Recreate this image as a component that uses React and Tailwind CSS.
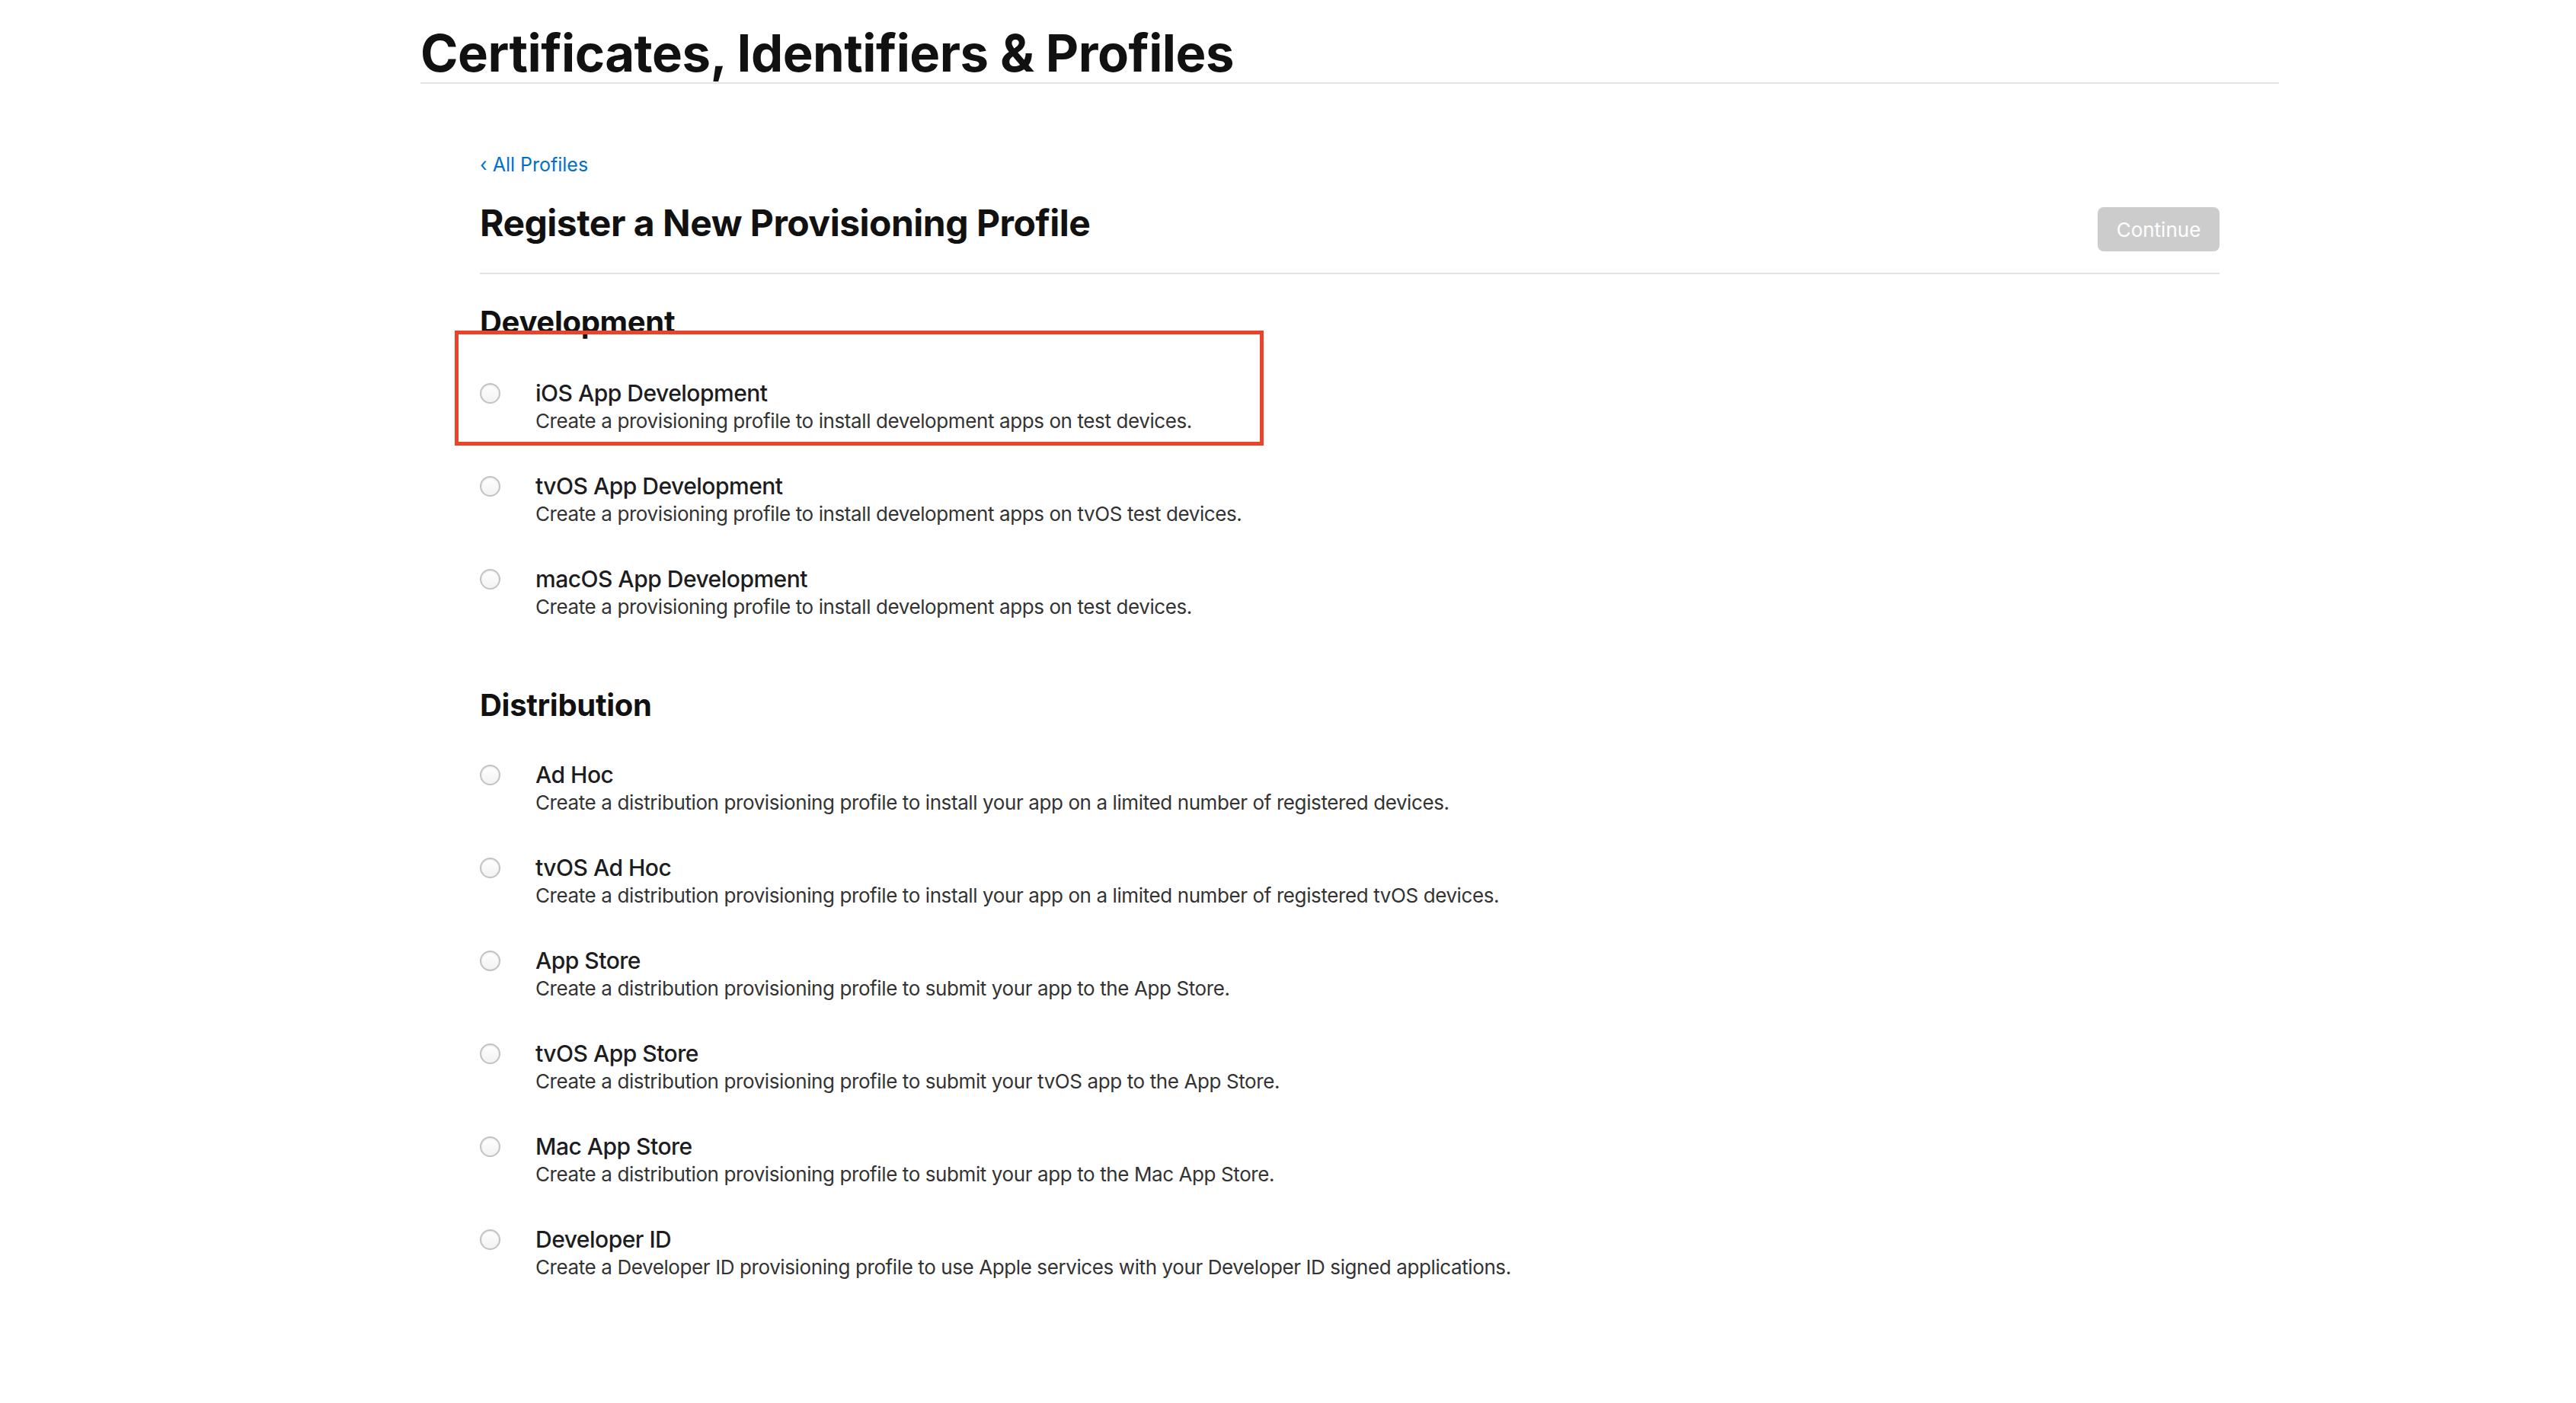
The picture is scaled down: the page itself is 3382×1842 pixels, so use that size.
import React from 'react'

const development = [
  { title: 'iOS App Development', desc: 'Create a provisioning profile to install development apps on test devices.', marked: true },
  { title: 'tvOS App Development', desc: 'Create a provisioning profile to install development apps on tvOS test devices.' },
  { title: 'macOS App Development', desc: 'Create a provisioning profile to install development apps on test devices.' },
]

const distribution = [
  { title: 'Ad Hoc', desc: 'Create a distribution provisioning profile to install your app on a limited number of registered devices.' },
  { title: 'tvOS Ad Hoc', desc: 'Create a distribution provisioning profile to install your app on a limited number of registered tvOS devices.' },
  { title: 'App Store', desc: 'Create a distribution provisioning profile to submit your app to the App Store.' },
  { title: 'tvOS App Store', desc: 'Create a distribution provisioning profile to submit your tvOS app to the App Store.' },
  { title: 'Mac App Store', desc: 'Create a distribution provisioning profile to submit your app to the Mac App Store.' },
  { title: 'Developer ID', desc: 'Create a Developer ID provisioning profile to use Apple services with your Developer ID signed applications.' },
]

function Option({ title, desc, marked }) {
  return (
    <label className="relative flex items-start cursor-pointer">
      {marked && (
        <div className="absolute -left-[33px] -top-[64px] w-[1062px] h-[151px] border-[5px] border-[#e8432b] pointer-events-none" />
      )}
      <span className="mt-[5px] w-[27px] h-[27px] shrink-0 rounded-full border-2 border-[#c2c2c2] bg-gradient-to-b from-white to-[#f2f2f2] shadow-[inset_0_1px_2px_rgba(0,0,0,0.1)]" />
      <div className="ml-[46px]">
        <div className="text-[30px] leading-[36px] font-medium text-[#1d1d1f] tracking-[-0.5px]">{title}</div>
        <div className="mt-[3px] text-[26px] leading-[32px] text-[#333] tracking-[-0.4px]">{desc}</div>
      </div>
    </label>
  )
}

export default function App() {
  return (
    <div className="min-h-screen bg-white" style={{ fontFamily: 'Inter, "Noto Sans", "Liberation Sans", sans-serif' }}>
      <div className="ml-[552px] w-[2440px] pt-[31px] pb-[80px]">
        <h1 className="text-[67px] leading-[77px] font-bold text-[#111] tracking-[-0.5px]">Certificates, Identifiers &amp; Profiles</h1>
        <div className="h-[2px] bg-[#e3e3e3]" />

        <div className="px-[78px]">
          <a href="#" className="block mt-[90px] text-[25px] leading-[32px] text-[#0070c9]">‹ All Profiles</a>

          <div className="mt-[33px] flex items-start justify-between">
            <h2 className="text-[48px] leading-[56px] font-bold text-[#111] tracking-[-0.5px]">Register a New Provisioning Profile</h2>
            <button className="mt-[7px] w-[160px] h-[58px] rounded-[8px] bg-[#cccccc] text-white text-[26px]">Continue</button>
          </div>
          <div className="mt-[28px] h-[2px] bg-[#e3e3e3]" />

          <h3 className="mt-[41px] text-[40px] leading-[44px] font-bold text-[#111] tracking-[-0.3px]">Development</h3>
          <div className="mt-[53px] flex flex-col gap-[51px]">
            {development.map(o => <Option key={o.title} {...o} />)}
          </div>

          <h3 className="mt-[91px] text-[40px] leading-[44px] font-bold text-[#111] tracking-[-0.3px]">Distribution</h3>
          <div className="mt-[51px] flex flex-col gap-[51px]">
            {distribution.map(o => <Option key={o.title} {...o} />)}
          </div>
        </div>
      </div>
    </div>
  )
}
